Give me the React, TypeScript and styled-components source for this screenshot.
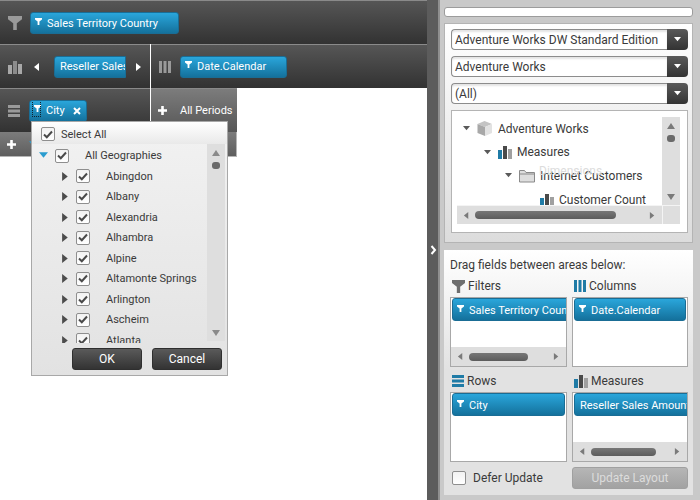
import React from 'react';
import styled, { createGlobalStyle } from 'styled-components';

const GlobalStyle = createGlobalStyle`
  html, body {
    margin: 0;
    padding: 0;
    width: 700px;
    height: 500px;
    overflow: hidden;
    background: #ffffff;
    font-family: Roboto, "Open Sans", sans-serif;
    font-size: 12px;
    color: #3a3a3a;
  }
`;

const Page = styled.div`
  display: flex;
  width: 700px;
  height: 500px;
`;

/* ---------- left: pivot grid ---------- */

const GridArea = styled.div`
  position: relative;
  flex: none;
  width: 427px;
  height: 500px;
  font-size: 11px;
  background: #ffffff;
`;

const DarkBar = styled.div`
  display: flex;
  align-items: center;
  box-sizing: border-box;
  background: linear-gradient(#565656, #323232);
  border-top: 1px solid #8a8a8a;
`;

const FilterBar = styled(DarkBar)`
  height: 44px;
  padding: 1px 0 0 8px;
  gap: 8px;
`;

const MiddleRow = styled.div`
  display: flex;
  height: 44px;
`;

const MeasureCell = styled(DarkBar)`
  width: 150px;
  padding-left: 8px;
`;

const ColumnCell = styled(DarkBar)`
  flex: 1;
  margin-left: 1px;
  padding-left: 8px;
  gap: 9px;
`;

const LowerRow = styled.div`
  display: flex;
  height: 44px;
`;

const RowCell = styled(DarkBar)`
  width: 150px;
  padding-left: 8px;
  gap: 9px;
`;

const PeriodCell = styled.div`
  display: flex;
  align-items: center;
  box-sizing: border-box;
  width: 86px;
  margin-left: 1px;
  padding-left: 7px;
  gap: 13px;
  color: #ffffff;
  white-space: nowrap;
  background: linear-gradient(#7c7c7c, #565656);
  border-top: 1px solid #8a8a8a;
`;

const SubHeader = styled.div`
  display: flex;
  align-items: center;
  box-sizing: border-box;
  width: 237px;
  height: 25px;
  padding-left: 7px;
  gap: 13px;
  background: linear-gradient(#7c7c7c, #5e5e5e);
  border-right: 1px solid #b5b5b5;
  border-bottom: 1px solid #b5b5b5;
`;

const Pill = styled.div<{ $width?: number; $flat?: boolean }>`
  display: flex;
  align-items: center;
  box-sizing: border-box;
  flex: none;
  width: ${p => (p.$width ? `${p.$width}px` : 'auto')};
  height: 23px;
  padding-left: 4px;
  font-size: 11px;
  color: #ffffff;
  white-space: nowrap;
  overflow: hidden;
  background: linear-gradient(#2aa6db, #14719c);
  border: 1px solid #1a6d95;
  border-radius: ${p => (p.$flat ? '3px 0 0 3px' : '3px')};
`;

const BarPill = styled(Pill)`
  height: 22px;
`;

const AreaPill = styled(Pill)`
  padding-top: 2px;
`;

const PillLabel = styled.span`
  margin-left: 5px;
`;

const PlainLabel = styled.span`
  margin-left: 1px;
`;

const PillIcon = styled.span`
  display: flex;
  margin-bottom: 4px;
`;

const FocusedIcon = styled(PillIcon)`
  position: relative;
  &::after {
    content: '';
    position: absolute;
    left: -2px;
    top: -5px;
    width: 7px;
    height: 15px;
    border: 1px dotted #10222c;
  }
`;

const PagerIcon = styled.svg`
  display: block;
  flex: none;
`;

const Pager = styled.div`
  display: flex;
  align-items: center;
  margin-left: 11px;
  gap: 9px;
`;

const PagerPill = styled(BarPill)`
  margin-left: 4px;
`;

/* ---------- filter popup ---------- */

const Popup = styled.div`
  position: absolute;
  left: 31px;
  top: 121px;
  box-sizing: border-box;
  width: 197px;
  height: 255px;
  background: linear-gradient(#f2f2f2, #e2e2e2);
  border: 1px solid #a8a8a8;
  display: flex;
  flex-direction: column;
`;

const SelectAllRow = styled.div`
  display: flex;
  align-items: center;
  box-sizing: border-box;
  flex: none;
  height: 22px;
  padding: 2px 0 0 9px;
  gap: 6px;
  background: linear-gradient(#ffffff, #e9e9e9);
`;

const ListWrap = styled.div`
  display: flex;
  height: 199px;
  overflow: hidden;
  flex: none;
  padding-right: 2px;
`;

const CityList = styled.div`
  flex: 1;
  display: grid;
  grid-auto-rows: 20.5px;
  align-content: start;
  padding-top: 1.4px;
`;

const CityRow = styled.div<{ $root?: boolean }>`
  display: flex;
  align-items: center;
  padding-left: ${p => (p.$root ? 7 : 29)}px;
`;

const Toggle = styled.span<{ $root?: boolean }>`
  display: flex;
  justify-content: center;
  width: 9px;
  margin-right: ${p => (p.$root ? 7 : 6)}px;
`;

const CityName = styled.span`
  margin-left: 16px;
  white-space: nowrap;
`;

const Box = styled.span<{ $size?: number }>`
  display: flex;
  align-items: center;
  justify-content: center;
  box-sizing: border-box;
  flex: none;
  width: ${p => p.$size ?? 14}px;
  height: ${p => p.$size ?? 14}px;
  background: linear-gradient(#f2f2f2, #ffffff);
  border: 1px solid #8e8e8e;
  border-radius: 2px;
`;

const VScroll = styled.div<{ $height: number }>`
  position: relative;
  flex: none;
  width: 18px;
  height: ${p => p.$height}px;
  background: #dedede;
`;

const ScrollEnd = styled.svg<{ $at: 'top' | 'bottom' }>`
  position: absolute;
  left: 5px;
  ${p => (p.$at === 'top' ? 'top: 6px;' : 'bottom: 5px;')}
`;

const VThumb = styled.div`
  position: absolute;
  left: 5px;
  top: 18px;
  width: 8px;
  height: 7px;
  border-radius: 3px;
  background: #6a6a6a;
`;

const ButtonRow = styled.div`
  display: flex;
  justify-content: flex-end;
  gap: 10px;
  padding: 5px 5px 0 0;
`;

const DarkButton = styled.button`
  box-sizing: border-box;
  width: 70px;
  height: 22px;
  padding: 0;
  font-family: inherit;
  font-size: 12px;
  color: #ffffff;
  background: linear-gradient(#5a5a5a, #333333);
  border: 1px solid #2f2f2f;
  border-radius: 3px;
`;

/* ---------- splitter ---------- */

const Splitter = styled.div`
  display: flex;
  align-items: center;
  flex: none;
  box-sizing: border-box;
  width: 13px;
  height: 500px;
  padding: 0 0 0 3px;
  background: #5c5c5c;
  border-right: 2px solid #8f8f8f;
`;

/* ---------- right: field list ---------- */

const Side = styled.div`
  flex: none;
  width: 260px;
  display: flex;
  flex-direction: column;
  box-sizing: border-box;
  padding: 7px 7px 0 4px;
  background: #c9c9c9;
`;

const SearchBox = styled.div`
  flex: none;
  height: 10px;
  box-sizing: border-box;
  background: #ffffff;
  border: 1px solid #9c9c9c;
  border-radius: 3px;
`;

const CubePanel = styled.div`
  flex: none;
  box-sizing: border-box;
  height: 220px;
  margin-top: 6px;
  padding: 5px 4px 0 6px;
  display: flex;
  flex-direction: column;
  gap: 6px;
  background: linear-gradient(#ffffff, #dcdcdc);
  border: 1px solid #b4b4b4;
`;

const Combo = styled.div`
  display: flex;
  flex: none;
  height: 21px;
`;

const ComboText = styled.div`
  flex: 1;
  min-width: 0;
  box-sizing: border-box;
  padding-left: 3px;
  line-height: 21px;
  white-space: nowrap;
  overflow: hidden;
  background: #ffffff;
  border: 1px solid #8c8c8c;
  border-right: none;
  border-radius: 4px 0 0 4px;
  box-shadow: inset 0 2px 2px #e4e4e4;
`;

const ComboButton = styled.div`
  display: flex;
  align-items: center;
  justify-content: center;
  flex: none;
  width: 21px;
  background: linear-gradient(#5a5a5a, #333333);
  border-radius: 0 4px 4px 0;
`;

const TreeBox = styled.div`
  box-sizing: border-box;
  height: 123px;
  padding: 6px 7px 6px 5px;
  background: #ffffff;
  border: 1px solid #b4b4b4;
  display: grid;
  grid-template-columns: 205px 18px;
  grid-template-rows: 88px 19px;
  column-gap: 0;
`;

const TreeRows = styled.div`
  position: relative;
  overflow: hidden;
`;

const TreeRow = styled.div<{ $level: number }>`
  display: flex;
  align-items: center;
  height: 23.6px;
  padding-left: ${p => 5 + p.$level * 21}px;
  gap: 5px;
  white-space: nowrap;
`;

const TreeArrow = styled.span`
  display: flex;
  justify-content: center;
  flex: none;
  width: 9px;
  margin-right: 1px;
`;

const GhostLabel = styled.span`
  position: absolute;
  left: 82px;
  top: 47px;
  color: #dcdcdc;
`;

const HScroll = styled.div`
  position: relative;
  display: flex;
  align-items: center;
  justify-content: space-between;
  padding: 0 6px;
  background: #dedede;
  border-top: 1px solid #f4f4f4;
`;

const HThumb = styled.div<{ $left: number; $width: number }>`
  position: absolute;
  left: ${p => p.$left}px;
  width: ${p => p.$width}px;
  height: 8px;
  border-radius: 4px;
  background: linear-gradient(#777777, #5c5c5c);
`;

const ScrollCorner = styled.div`
  background: #dedede;
  border-top: 1px solid #f4f4f4;
  border-left: 1px solid #f4f4f4;
`;

const LayoutPanel = styled.div`
  flex: none;
  box-sizing: border-box;
  height: 245px;
  margin-top: 7px;
  padding: 5px 5px 0 6px;
  background: linear-gradient(#ffffff 0, #e2e2e2 120px, #e2e2e2);
`;

const Hint = styled.div`
  height: 18px;
  line-height: 20px;
`;

const AreaGrid = styled.div`
  display: grid;
  grid-template-columns: 117px 116px;
  grid-template-rows: 95px 95px;
  column-gap: 5px;
`;

const Area = styled.div`
  display: flex;
  flex-direction: column;
  min-width: 0;
`;

const AreaTitle = styled.div`
  display: flex;
  align-items: center;
  box-sizing: border-box;
  gap: 3px;
  height: 24px;
  padding: 2px 0 0 2px;
`;

const AreaBox = styled.div`
  position: relative;
  box-sizing: border-box;
  height: 70px;
  padding: 0 1px;
  overflow: hidden;
  background: #ffffff;
  border: 1px solid #a8a8a8;
`;

const AreaHScroll = styled(HScroll)`
  position: absolute;
  left: 0;
  right: 0;
  bottom: 0;
  height: 19px;
  box-sizing: border-box;
  border-top: none;
`;

const Footer = styled.div`
  display: grid;
  grid-template-columns: 117px 116px;
  column-gap: 5px;
  align-items: center;
  margin-top: 4px;
`;

const DeferRow = styled.div`
  display: flex;
  align-items: center;
  gap: 7px;
  padding-left: 2px;
`;

const UpdateButton = styled.button`
  box-sizing: border-box;
  height: 22px;
  padding: 0;
  font: inherit;
  color: #dcdcdc;
  background: linear-gradient(#b6b6b6, #a2a2a2);
  border: 1px solid #a0a0a0;
  border-radius: 3px;
`;

/* ---------- drawings ---------- */

const Funnel = ({ size = 7, color = '#ffffff' }: { size?: number; color?: string }) => (
  <svg width={size} height={size} viewBox="0 0 7 7" style={{ flex: 'none' }}>
    <path d="M0 0H7V1.6L4.4 3.6V7H2.6V3.6L0 1.6Z" fill={color} />
  </svg>
);

const Caret = ({ dir, color = '#4c4c4c', size = 7 }: { dir: 'up' | 'down' | 'left' | 'right'; color?: string; size?: number }) => {
  const points = {
    up: '0,6 4,1 8,6',
    down: '0,1 8,1 4,6',
    left: '6,0 6,8 1,4',
    right: '1,0 1,8 6,4',
  }[dir];
  return (
    <PagerIcon width={size} height={size} viewBox="0 0 8 8">
      <polygon points={points} fill={color} />
    </PagerIcon>
  );
};

const Check = () => (
  <svg width="10" height="9" viewBox="0 0 10 9">
    <path d="M1 4.5L3.8 7.2L9 1.5" fill="none" stroke="#4a4a4a" strokeWidth="2" />
  </svg>
);

const CheckBox = ({ checked = true }: { checked?: boolean }) => <Box>{checked && <Check />}</Box>;

const Bars = ({ c1 = '#a8a8a8', c2 = '#8c8c8c', c3 = '#a8a8a8', w = 14, h = 14 }) => (
  <svg width={w} height={h} viewBox="0 0 14 14" style={{ flex: 'none' }}>
    <rect x="0" y="5" width="4" height="9" fill={c1} />
    <rect x="5" y="1" width="4" height="13" fill={c2} />
    <rect x="10" y="4" width="4" height="10" fill={c3} />
  </svg>
);

const ColumnsIcon = ({ color = '#9a9a9a' }: { color?: string }) => (
  <svg width="12" height="12" viewBox="0 0 12 12" style={{ flex: 'none' }}>
    <rect x="0" y="0" width="3" height="12" fill={color} />
    <rect x="4.5" y="0" width="3" height="12" fill={color} />
    <rect x="9" y="0" width="3" height="12" fill={color} />
  </svg>
);

const RowsIcon = ({ color = '#9a9a9a' }: { color?: string }) => (
  <svg width="12" height="12" viewBox="0 0 12 12" style={{ flex: 'none' }}>
    <rect x="0" y="0" width="12" height="3" fill={color} />
    <rect x="0" y="4.5" width="12" height="3" fill={color} />
    <rect x="0" y="9" width="12" height="3" fill={color} />
  </svg>
);

const Plus = () => (
  <svg width="9" height="9" viewBox="0 0 9 9" style={{ flex: 'none' }}>
    <path d="M3.2 0H5.8V3.2H9V5.8H5.8V9H3.2V5.8H0V3.2H3.2Z" fill="#ffffff" />
  </svg>
);

const Cross = () => (
  <svg width="8" height="8" viewBox="0 0 8 8" style={{ flex: 'none', marginLeft: 8 }}>
    <path d="M1 1L7 7M7 1L1 7" stroke="#ffffff" strokeWidth="2" />
  </svg>
);

const Cube = () => (
  <svg width="16" height="17" viewBox="0 0 16 17" style={{ flex: 'none' }}>
    <path d="M0.500 4L7.500 1L15 4L8 7Z" fill="#c4c4c4" />
    <path d="M0.500 4L8 7V16L0.500 13Z" fill="#a8a8a8" />
    <path d="M8 7L15 4V13L8 16Z" fill="#e2e2e2" />
  </svg>
);

const Folder = () => (
  <svg width="16" height="14" viewBox="0 0 16 14" style={{ flex: 'none' }}>
    <path d="M0.500 13V1.500H5.500L7 3.500H15.500V13Z" fill="#dedede" stroke="#8a8a8a" />
    <path d="M1 5H15" stroke="#8a8a8a" />
  </svg>
);

const Chevron = () => (
  <svg width="7" height="10" viewBox="0 0 7 10">
    <path d="M1.500 1L5 5L1.500 9" fill="none" stroke="#ffffff" strokeWidth="2" />
  </svg>
);

const cities = [
  'Abingdon',
  'Albany',
  'Alexandria',
  'Alhambra',
  'Alpine',
  'Altamonte Springs',
  'Arlington',
  'Ascheim',
  'Atlanta',
];

function App() {
  return (
    <Page>
      <GlobalStyle />
      <GridArea>
        <FilterBar>
          <Funnel size={14} color="#9a9a9a" />
          <BarPill $width={149}>
            <PillIcon><Funnel /></PillIcon>
            <PillLabel>Sales Territory Country</PillLabel>
          </BarPill>
        </FilterBar>
        <MiddleRow>
          <MeasureCell>
            <Bars />
            <Pager>
              <Caret dir="left" color="#ffffff" size={8} />
              <PagerPill $width={72} $flat>
                <PlainLabel>Reseller Sales Amount</PlainLabel>
              </PagerPill>
              <Caret dir="right" color="#ffffff" size={8} />
            </Pager>
          </MeasureCell>
          <ColumnCell>
            <ColumnsIcon />
            <BarPill $width={107}>
              <PillIcon><Funnel /></PillIcon>
              <PillLabel>Date.Calendar</PillLabel>
            </BarPill>
          </ColumnCell>
        </MiddleRow>
        <LowerRow>
          <RowCell>
            <RowsIcon />
            <BarPill $width={58}>
              <FocusedIcon><Funnel /></FocusedIcon>
              <PillLabel>City</PillLabel>
              <Cross />
            </BarPill>
          </RowCell>
          <PeriodCell>
            <Plus />
            <span>All Periods</span>
          </PeriodCell>
        </LowerRow>
        <SubHeader>
          <Plus />
          <Caret dir="down" color="#2a9ccf" size={9} />
        </SubHeader>
        <Popup>
          <SelectAllRow>
            <CheckBox />
            <span>Select All</span>
          </SelectAllRow>
          <ListWrap>
            <CityList>
              <CityRow $root>
                <Toggle $root>
                  <Caret dir="down" color="#2a9ccf" size={9} />
                </Toggle>
                <CheckBox />
                <CityName>All Geographies</CityName>
              </CityRow>
              {cities.map(city => (
                <CityRow key={city}>
                  <Toggle>
                    <Caret dir="right" size={9} />
                  </Toggle>
                  <CheckBox />
                  <CityName>{city}</CityName>
                </CityRow>
              ))}
            </CityList>
            <VScroll $height={197}>
              <ScrollEnd $at="top" width="8" height="6" viewBox="0 0 8 6">
                <polygon points="0,6 4,0 8,6" fill="#8a8a8a" />
              </ScrollEnd>
              <VThumb />
              <ScrollEnd $at="bottom" width="8" height="6" viewBox="0 0 8 6">
                <polygon points="0,0 8,0 4,6" fill="#8a8a8a" />
              </ScrollEnd>
            </VScroll>
          </ListWrap>
          <ButtonRow>
            <DarkButton>OK</DarkButton>
            <DarkButton>Cancel</DarkButton>
          </ButtonRow>
        </Popup>
      </GridArea>
      <Splitter>
        <Chevron />
      </Splitter>
      <Side>
        <SearchBox />
        <CubePanel>
          <Combo>
            <ComboText>Adventure Works DW Standard Edition</ComboText>
            <ComboButton><Caret dir="down" color="#ffffff" /></ComboButton>
          </Combo>
          <Combo>
            <ComboText>Adventure Works</ComboText>
            <ComboButton><Caret dir="down" color="#ffffff" /></ComboButton>
          </Combo>
          <Combo>
            <ComboText>(All)</ComboText>
            <ComboButton><Caret dir="down" color="#ffffff" /></ComboButton>
          </Combo>
          <TreeBox>
            <TreeRows>
              <TreeRow $level={0}>
                <TreeArrow><Caret dir="down" color="#5a5a5a" /></TreeArrow>
                <Cube />
                <span>Adventure Works</span>
              </TreeRow>
              <TreeRow $level={1}>
                <TreeArrow><Caret dir="down" color="#5a5a5a" /></TreeArrow>
                <Bars c1="#1f7ba6" c2="#4a4a4a" c3="#a0a0a0" />
                <span>Measures</span>
              </TreeRow>
              <TreeRow $level={2}>
                <TreeArrow><Caret dir="down" color="#5a5a5a" /></TreeArrow>
                <Folder />
                <span>Internet Customers</span>
              </TreeRow>
              <TreeRow $level={3}>
                <TreeArrow />
                <Bars c1="#1f7ba6" c2="#4a4a4a" c3="#a0a0a0" />
                <span>Customer Count</span>
              </TreeRow>
              <GhostLabel>Dimensions</GhostLabel>
            </TreeRows>
            <VScroll $height={88}>
              <ScrollEnd $at="top" width="8" height="6" viewBox="0 0 8 6">
                <polygon points="0,6 4,0 8,6" fill="#7a7a7a" />
              </ScrollEnd>
              <VThumb />
              <ScrollEnd $at="bottom" width="8" height="6" viewBox="0 0 8 6">
                <polygon points="0,0 8,0 4,6" fill="#7a7a7a" />
              </ScrollEnd>
            </VScroll>
            <HScroll>
              <Caret dir="left" color="#7a7a7a" />
              <HThumb $left={18} $width={141} />
              <Caret dir="right" color="#7a7a7a" />
            </HScroll>
            <ScrollCorner />
          </TreeBox>
        </CubePanel>
        <LayoutPanel>
          <Hint>Drag fields between areas below:</Hint>
          <AreaGrid>
            <Area>
              <AreaTitle>
                <Funnel size={13} color="#6e6e6e" />
                <span>Filters</span>
              </AreaTitle>
              <AreaBox>
                <AreaPill $width={130}>
                  <PillIcon><Funnel /></PillIcon>
                  <PillLabel>Sales Territory Country</PillLabel>
                </AreaPill>
                <AreaHScroll>
                  <Caret dir="left" color="#7a7a7a" />
                  <HThumb $left={18} $width={59} />
                  <Caret dir="right" color="#7a7a7a" />
                </AreaHScroll>
              </AreaBox>
            </Area>
            <Area>
              <AreaTitle>
                <ColumnsIcon color="#1f7ba6" />
                <span>Columns</span>
              </AreaTitle>
              <AreaBox>
                <AreaPill>
                  <PillIcon><Funnel /></PillIcon>
                  <PillLabel>Date.Calendar</PillLabel>
                </AreaPill>
              </AreaBox>
            </Area>
            <Area>
              <AreaTitle>
                <RowsIcon color="#1f7ba6" />
                <span>Rows</span>
              </AreaTitle>
              <AreaBox>
                <AreaPill>
                  <PillIcon><Funnel /></PillIcon>
                  <PillLabel>City</PillLabel>
                </AreaPill>
              </AreaBox>
            </Area>
            <Area>
              <AreaTitle>
                <Bars c1="#1f7ba6" c2="#4a4a4a" c3="#a0a0a0" />
                <span>Measures</span>
              </AreaTitle>
              <AreaBox>
                <AreaPill $width={130}>
                  <PlainLabel>Reseller Sales Amount</PlainLabel>
                </AreaPill>
                <AreaHScroll>
                  <Caret dir="left" color="#7a7a7a" />
                  <HThumb $left={18} $width={65} />
                  <Caret dir="right" color="#7a7a7a" />
                </AreaHScroll>
              </AreaBox>
            </Area>
          </AreaGrid>
          <Footer>
            <DeferRow>
              <CheckBox checked={false} />
              <span>Defer Update</span>
            </DeferRow>
            <UpdateButton>Update Layout</UpdateButton>
          </Footer>
        </LayoutPanel>
      </Side>
    </Page>
  );
}

export default App;
